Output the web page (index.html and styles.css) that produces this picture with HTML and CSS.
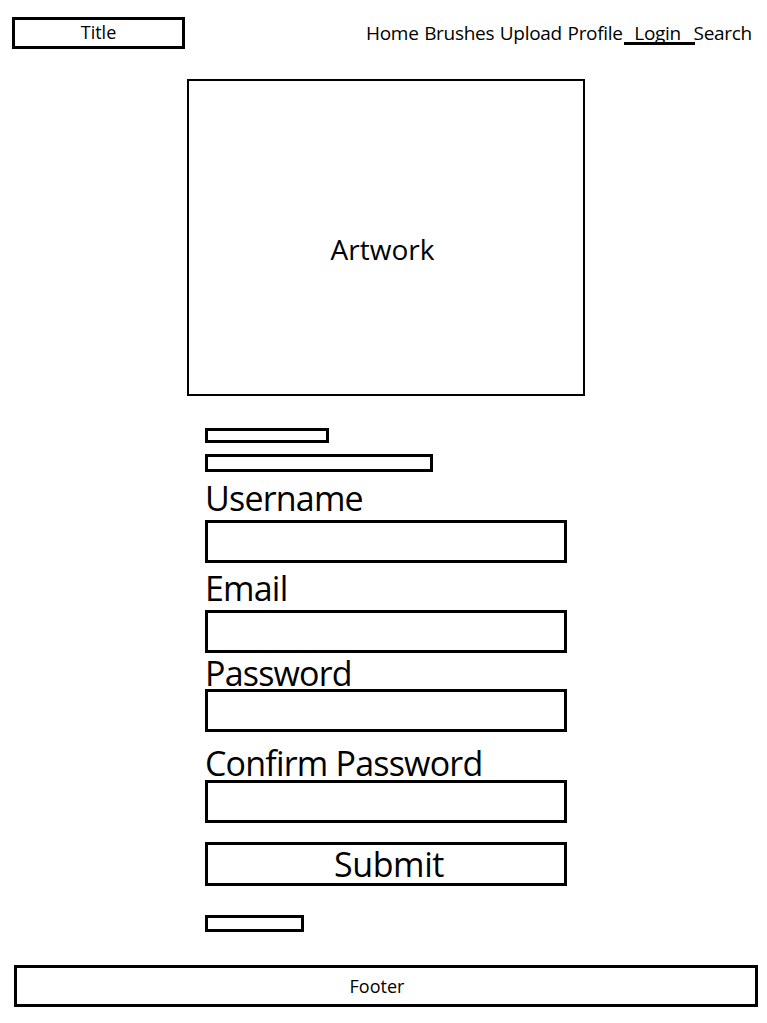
FILE: index.html
```html
<!DOCTYPE html>
<html>
<head>
<meta charset="utf-8">
<link rel="stylesheet" href="styles.css">
</head>
<body>
<header class="header">
  <div class="title">Title</div>
  <nav class="nav">
    <span class="nav-item">Home</span>
    <span class="nav-item">Brushes</span>
    <span class="nav-item">Upload</span>
    <span class="nav-item">Profile</span>
    <span class="nav-item nav-active">Login</span>
    <span class="nav-item">Search</span>
  </nav>
</header>
<main class="main">
  <div class="artwork">Artwork</div>
  <div class="form">
    <div class="bar bar-short"></div>
    <div class="bar bar-long"></div>
    <div class="label label-user">Username</div>
    <div class="input"></div>
    <div class="label label-email">Email</div>
    <div class="input"></div>
    <div class="label label-pass">Password</div>
    <div class="input"></div>
    <div class="label label-confirm">Confirm Password</div>
    <div class="input"></div>
    <div class="submit">Submit</div>
    <div class="bar bar-bottom"></div>
  </div>
</main>
<footer class="footer">Footer</footer>
</body>
</html>
```
FILE: styles.css
```css
* { box-sizing: border-box; }
body {
  margin: 0;
  background: #fff;
  color: #000;
  font-family: "Open Sans", "Noto Sans", sans-serif;
  width: 767px;
  height: 1023px;
  overflow: hidden;
}
.header {
  display: flex;
  justify-content: space-between;
  align-items: flex-start;
  padding: 17px 15px 0 12px;
  height: 79px;
}
.title {
  width: 173px;
  height: 32px;
  border: 3px solid #000;
  font-size: 18px;
  line-height: 25px;
  text-align: center;
}
.nav {
  width: 386px;
  display: flex;
  justify-content: space-between;
  align-items: flex-start;
  font-size: 19px;
  line-height: 28px;
  margin-top: 2px;
  letter-spacing: -0.3px;
}
.nav-active {
  height: 26px;
  border-bottom: 3px solid #000;
  padding: 0 14px 0 10px;
  margin: 0 -7px 0 -4px;
}
.main {
  display: flex;
  flex-direction: column;
  padding-left: 187px;
}
.artwork {
  width: 398px;
  height: 317px;
  border: 2px solid #000;
  display: flex;
  align-items: center;
  justify-content: center;
  font-size: 28px;
  padding: 22px 7px 0 0;
}
.form {
  margin-left: 18px;
  width: 362px;
  display: flex;
  flex-direction: column;
  padding-top: 32px;
}
.bar {
  border: 3px solid #000;
}
.bar-short { width: 124px; height: 15px; }
.bar-long { width: 228px; height: 18px; margin-top: 11px; }
.bar-bottom { width: 99px; height: 17px; margin-top: 29px; }
.label {
  font-size: 34px;
  line-height: 36px;
  letter-spacing: -0.8px;
}
.label-user { margin: 8px 0 4px; }
.label-email { margin: 7px 0 4px; }
.label-pass { margin: 2px 0 -2px; }
.label-confirm { margin: 13px 0 -1px; }
.input {
  width: 362px;
  height: 43px;
  border: 3px solid #000;
}
.submit {
  margin-top: 19px;
  width: 362px;
  height: 44px;
  border: 3px solid #000;
  font-size: 34px;
  line-height: 38px;
  letter-spacing: -0.4px;
  text-align: center;
  padding-left: 6px;
}
.footer {
  margin: 33px 0 0 14px;
  width: 744px;
  height: 42px;
  border: 3px solid #000;
  font-size: 18px;
  line-height: 36px;
  text-align: center;
  padding-right: 18px;
}
```
